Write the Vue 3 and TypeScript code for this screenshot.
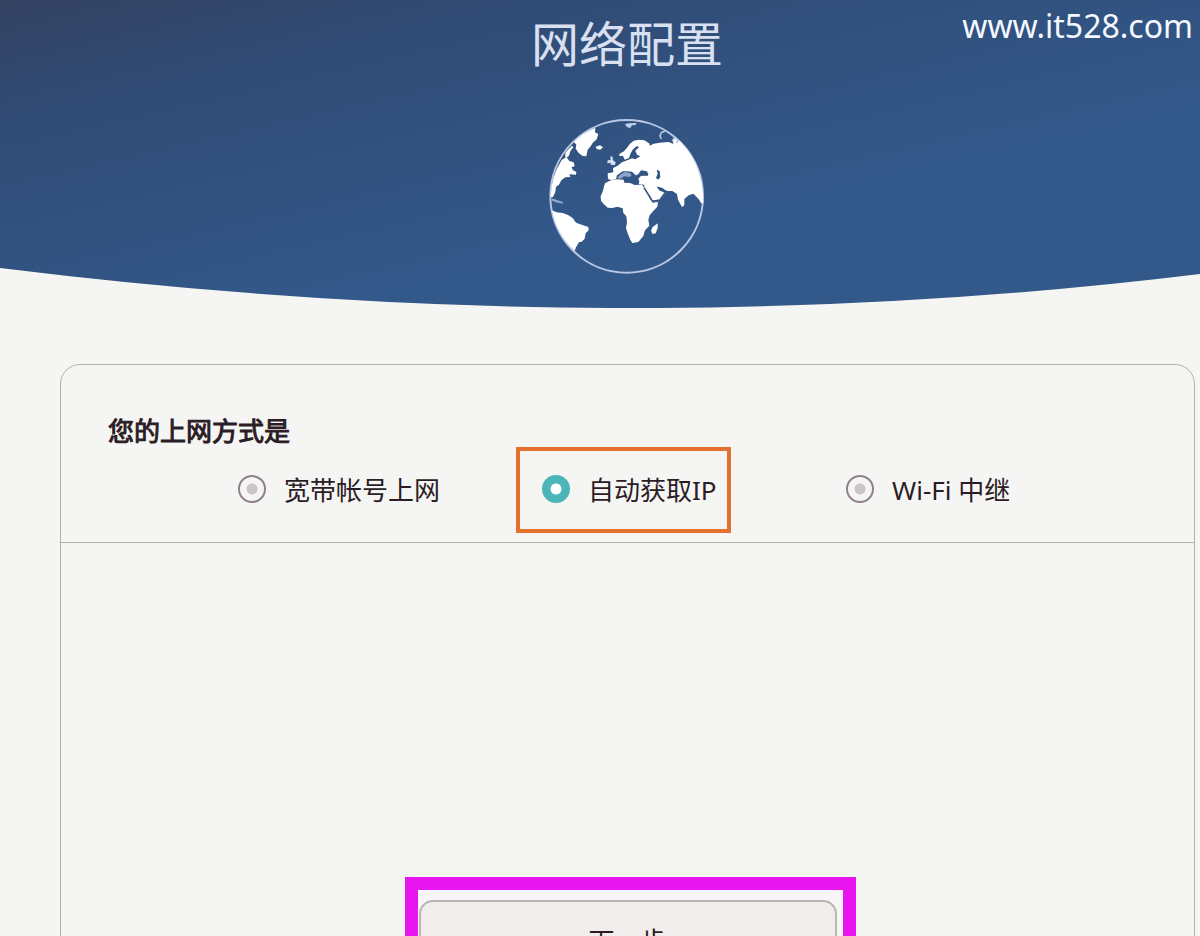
<script setup lang="ts">
import { ref } from 'vue'

interface AccessMode {
  value: string
  label: string
  marked?: boolean
}

const modes: AccessMode[] = [
  { value: 'pppoe', label: '宽带帐号上网' },
  { value: 'dhcp', label: '自动获取IP', marked: true },
  { value: 'relay', label: 'Wi-Fi 中继' },
]

const selected = ref('dhcp')
</script>

<template>
  <div class="page">
    <header class="banner">
      <svg class="backdrop" viewBox="0 0 1200 308" preserveAspectRatio="none" aria-hidden="true">
        <defs>
          <linearGradient id="sky" gradientUnits="userSpaceOnUse" x1="0" y1="0" x2="85" y2="370">
            <stop offset="0" stop-color="#344262" />
            <stop offset="0.3" stop-color="#304b74" />
            <stop offset="1" stop-color="#33598b" />
          </linearGradient>
        </defs>
        <path d="M0 0H1200V274Q620 345 0 268Z" fill="url(#sky)" />
      </svg>
      <a class="site" href="#">www.it528.com</a>
      <h1 class="title">网络配置</h1>
      <svg class="globe" viewBox="0 0 525 516" role="img" aria-label="地球">
        <circle cx="260" cy="259" r="229" fill="none" stroke="#b9c7e4" stroke-width="6" />
        <g fill="#fff">
          <path d="M102 96Q130 67 166 53L165 67L175 72L170 88L158 99L151 110L143 119L139 139L128 138L116 129L107 116L109 104Z" />
          <path d="M167 110L180 106L189 112L181 119L170 117Z" />
          <path d="M84 119L96 107L100 112L91 124L87 137L80 142L88 153L101 157L104 169L95 171L98 180L109 186L108 194L88 193L91 201L76 202L64 211L57 224L48 230L46 246L39 261L32 262Q33 200 65 150L76 143L76 129Z" />
          <path d="M36 265L48 269L69 276L68 281L48 277L36 272Z" fill="#91a8cc" />
          <path d="M36 301L50 307L68 309L84 315L98 324L108 338L125 344L145 351L146 361L137 370L134 386L125 395L117 397L108 412L104 423Q50 374 36 301Z" />
          <path d="M255 42L268 40L290 39L286 46L276 46L270 55L260 50Z" fill="#c3cfea" />
          <path d="M203 151L212 150L211 140L217 139L219 151L227 157L225 165L212 164L212 158L202 160Z" fill="#d8e3f5" />
          <path d="M238 132L252 124L261 113L270 101L281 92L297 89L313 91L329 101L329 107L341 101L359 98L386 96L400 102L398 90L404 80Q490 150 490 280L489 278L484 280L475 266L460 251L446 256L433 267L433 286L426 291L414 269L411 252L397 243L378 243L368 234L352 230L358 241L377 250L363 269L343 276L335 267L323 249L312 235L313 224L296 223L298 214L295 206L302 199L310 195L324 193L321 184L303 181L295 193L287 196L276 185L261 184L248 184L231 196L228 207L215 211L204 207L203 190L220 187L219 174L233 167L246 157L258 152L276 145L286 148L301 139L291 134L286 122L297 112L291 108L279 118L272 130L267 144L254 149L249 138L238 138Z" />
          <path d="M232 203L242 193L254 186L269 188L275 196L269 201L252 199L241 207Z" fill="#8da4c8" />
          <path d="M195 220L209 212L230 208L251 209L253 218L270 219L284 225L306 224L314 236L323 251L332 270L338 278L354 276L352 290L340 303L329 316L325 329L328 347L315 361L310 378L295 396L277 399L270 388L263 370L258 355L261 337L259 319L250 309L248 295L232 290L217 294L203 293L191 282L183 272L182 259L189 242L192 229Z" />
          <path d="M353 340L353 354L347 370L338 372L333 362L338 351Z" />
        </g>
        <path d="M350 179L359 183L361 202L354 209L348 203L353 192ZM311 186L325 190L324 197L304 197Z" fill="#315581" />
        <path d="M312 233L334 268M336 274L360 270L375 249M353 231L361 240L379 243" fill="none" stroke="#315581" stroke-width="5" />
        <path d="M364 87L360 78L364 68L375 63M397 94L404 81L414 90L410 99" fill="none" stroke="#b4c4de" stroke-width="5" />
      </svg>
    </header>

    <main class="card">
      <fieldset class="modes">
        <legend class="question">您的上网方式是</legend>
        <div class="options">
          <label
            v-for="mode in modes"
            :key="mode.value"
            class="option"
            :class="{ marked: mode.marked }"
          >
            <input v-model="selected" class="radio" type="radio" name="mode" :value="mode.value" />
            <span>{{ mode.label }}</span>
          </label>
        </div>
      </fieldset>
      <div class="actions">
        <div class="frame">
          <button class="next" type="button">下一步</button>
        </div>
      </div>
    </main>
  </div>
</template>

<style>
body {
  margin: 0;
  background: #f5f5f3;
}
</style>

<style scoped>
.page {
  height: 100vh;
  overflow: hidden;
  background: #f5f5f3;
  color: #2b1c25;
  font-family: "Noto Sans", "Noto Sans CJK SC", sans-serif;
  font-size: 26px;
}

.banner {
  position: relative;
  box-sizing: border-box;
  height: 308px;
  padding: 8px 6px 0 60px;
  display: flex;
  flex-direction: column;
  align-items: center;
}

.backdrop {
  position: absolute;
  inset: 0;
  width: 100%;
  height: 100%;
}

.site {
  position: absolute;
  top: 4px;
  right: 7px;
  color: #f4f8ff;
  font-family: "Noto Sans", sans-serif;
  font-size: 32px;
  line-height: 44px;
  text-decoration: none;
}

.title {
  position: relative;
  margin: 0;
  color: #d9e0f2;
  font-family: "Noto Sans CJK SC", sans-serif;
  font-size: 48px;
  font-weight: 400;
  line-height: 66px;
}

.globe {
  position: relative;
  width: 175px;
  height: 172px;
  margin-top: 36px;
}

.card {
  margin: 56px 5px 0 60px;
  border: 1px solid #b9aea9;
  border-radius: 20px;
}

.modes {
  margin: 0;
  padding: 50px 70px 9px 47px;
  border: 0;
  border-bottom: 1px solid #b9aea9;
}

.question {
  float: left;
  padding: 0;
  line-height: 32px;
  -webkit-text-stroke: 1px #2b1c25;
}

.options {
  clear: both;
  display: grid;
  grid-template-columns: repeat(3, 1fr);
  margin-left: 104px;
}

.option {
  justify-self: start;
  box-sizing: border-box;
  display: flex;
  align-items: center;
  gap: 18px;
  height: 86px;
  padding: 0 10px 2px 22px;
  border: 4px solid transparent;
  white-space: nowrap;
}

.marked {
  border-color: #e4722f;
}

.radio {
  appearance: none;
  flex: none;
  width: 28px;
  height: 28px;
  margin: 0;
  border: 2px solid #8f8186;
  border-radius: 50%;
  background: radial-gradient(circle, #cbc5c5 5px, transparent 6px);
}

.radio:checked {
  border-color: #4bb5b8;
  background: radial-gradient(circle, #fff 5px, #4bb5b8 6px);
}

.actions {
  display: flex;
  justify-content: center;
  padding: 334px 0 60px 5px;
}

.frame {
  box-sizing: border-box;
  width: 451px;
  padding: 10px 6px 12px 1px;
  border: 13px solid #e815ee;
  background: #f8f5f9;
}

.next {
  display: block;
  width: 100%;
  height: 80px;
  padding: 0;
  border: 2px solid #bdb5b2;
  border-radius: 14px;
  background: #f0edec;
  color: inherit;
  font: inherit;
}
</style>
